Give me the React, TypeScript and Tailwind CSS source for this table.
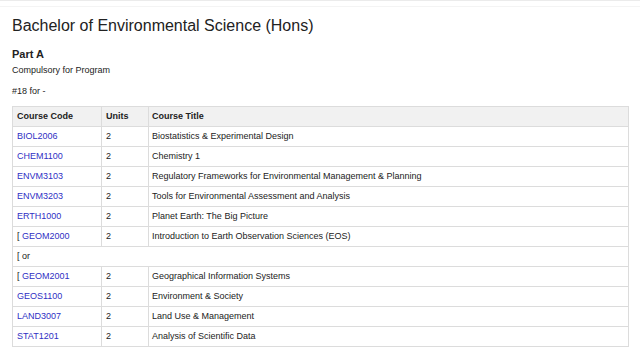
const courses: { code: string; units: string; title: string; bracket?: boolean }[] = [
  { code: 'BIOL2006', units: '2', title: 'Biostatistics & Experimental Design' },
  { code: 'CHEM1100', units: '2', title: 'Chemistry 1' },
  { code: 'ENVM3103', units: '2', title: 'Regulatory Frameworks for Environmental Management & Planning' },
  { code: 'ENVM3203', units: '2', title: 'Tools for Environmental Assessment and Analysis' },
  { code: 'ERTH1000', units: '2', title: 'Planet Earth: The Big Picture' },
  { code: 'GEOM2000', units: '2', title: 'Introduction to Earth Observation Sciences (EOS)', bracket: true },
];

const moreCourses: { code: string; units: string; title: string; bracket?: boolean }[] = [
  { code: 'GEOM2001', units: '2', title: 'Geographical Information Systems', bracket: true },
  { code: 'GEOS1100', units: '2', title: 'Environment & Society' },
  { code: 'LAND3007', units: '2', title: 'Land Use & Management' },
  { code: 'STAT1201', units: '2', title: 'Analysis of Scientific Data' },
];

function CourseRow({ c }: { c: { code: string; units: string; title: string; bracket?: boolean } }) {
  return (
    <tr className="h-[20px]">
      <td className="border border-[#dcdcdc] px-[4px] py-0 align-middle">
        {c.bracket && <span>[ </span>}
        <a href="#" className="text-[#2f2fc4]">{c.code}</a>
      </td>
      <td className="border border-[#dcdcdc] px-[4px] py-0 align-middle">{c.units}</td>
      <td className="border border-[#dcdcdc] px-[3px] py-0 align-middle">{c.title}</td>
    </tr>
  );
}

export default function App() {
  return (
    <div className="w-[640px] h-[355px] bg-white overflow-hidden text-[#222] font-['Liberation_Sans',Arial,sans-serif]">
      <div className="h-[1px] bg-[#ebebeb]" />
      <div className="h-[1px] mt-[5px] bg-[#f4f4f4]" />
      <div className="px-[12px] flex flex-col">
        <h1 className="mt-[10px] text-[16px] leading-[18px] font-normal text-[#222]">
          Bachelor of Environmental Science (Hons)
        </h1>
        <h2 className="mt-[13px] text-[11px] leading-[13px] font-bold">Part A</h2>
        <p className="mt-[4px] text-[9px] leading-[11px]">Compulsory for Program</p>
        <p className="mt-[10px] text-[9px] leading-[11px]">#18 for -</p>
        <table className="mt-[9px] w-[617px] border-collapse text-[9px] leading-[11px] text-left">
          <colgroup>
            <col className="w-[89px]" />
            <col className="w-[47px]" />
            <col />
          </colgroup>
          <thead>
            <tr className="h-[20px] bg-[#f1f1f1]">
              <th className="border border-[#dcdcdc] px-[4px] py-0 font-bold">Course Code</th>
              <th className="border border-[#dcdcdc] px-[4px] py-0 font-bold">Units</th>
              <th className="border border-[#dcdcdc] px-[3px] py-0 font-bold">Course Title</th>
            </tr>
          </thead>
          <tbody>
            {courses.map((c) => (
              <CourseRow key={c.code} c={c} />
            ))}
            <tr className="h-[20px]">
              <td colSpan={3} className="border border-[#dcdcdc] px-[4px] py-0">[ or</td>
            </tr>
            {moreCourses.map((c) => (
              <CourseRow key={c.code} c={c} />
            ))}
          </tbody>
        </table>
      </div>
    </div>
  );
}
